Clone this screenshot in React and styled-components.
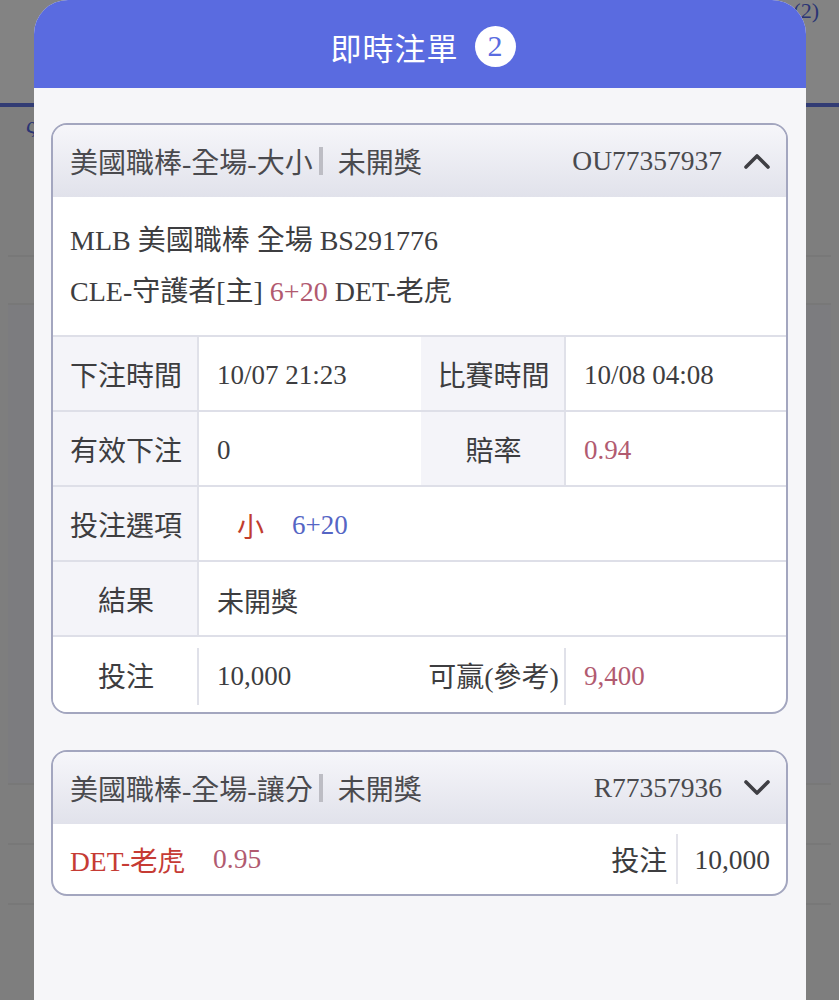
import React from "react";
import styled, { createGlobalStyle } from "styled-components";

const GlobalStyle = createGlobalStyle`
  html, body {
    margin: 0;
    padding: 0;
    width: 839px;
    height: 1000px;
    overflow: hidden;
    background: #7f7f7f;
  }
  * {
    box-sizing: border-box;
  }
  body {
    font-family: "Liberation Serif", "Noto Sans CJK TC", serif;
  }
`;

const bets = {
  open: {
    title: "美國職棒-全場-大小",
    status: "未開獎",
    id: "OU77357937",
    league: "MLB 美國職棒 全場 BS291776",
    home: "CLE-守護者[主]",
    line: "6+20",
    away: "DET-老虎",
    placedAt: "10/07 21:23",
    matchAt: "10/08 04:08",
    valid: "0",
    odds: "0.94",
    pick: "小",
    result: "未開獎",
    stake: "10,000",
    win: "9,400",
  },
  closed: {
    title: "美國職棒-全場-讓分",
    status: "未開獎",
    id: "R77357936",
    team: "DET-老虎",
    odds: "0.95",
    stake: "10,000",
  },
};

const Chevron = ({ up }) => (
  <svg width="26" height="16" viewBox="0 0 26 16" fill="none">
    <polyline
      points={up ? "2,14 13,3 24,14" : "2,2 13,13 24,2"}
      stroke="#3f3f44"
      strokeWidth="3.6"
      strokeLinecap="round"
      strokeLinejoin="round"
    />
  </svg>
);

const App = () => {
  const a = bets.open;
  const b = bets.closed;

  return (
    <>
      <GlobalStyle />
      <Backdrop>
        <BackTop>
          <BackCorner>(2)</BackCorner>
        </BackTop>
        <BackMark>ς</BackMark>
        <BackPanel $h={150} />
        <BackPanel $h={48} />
        <BackPanel $h={480} $dark />
        <BackPanel $h={60} />
        <BackPanel $h={60} />
      </Backdrop>

      <Modal>
        <ModalHead>
          <ModalTitle>即時注單</ModalTitle>
          <Badge>2</Badge>
        </ModalHead>

        <ModalBody>
          <Card>
            <CardHead>
              <HeadLeft>
                {a.title}
                <Bar />
                {a.status}
              </HeadLeft>
              <HeadRight>
                {a.id}
                <Chevron up />
              </HeadRight>
            </CardHead>

            <Info>
              <InfoLine>{a.league}</InfoLine>
              <InfoLine>
                {a.home} <Rose>{a.line}</Rose> {a.away}
              </InfoLine>
            </Info>

            <Table>
              <Label>下注時間</Label>
              <Value>{a.placedAt}</Value>
              <Label>比賽時間</Label>
              <Value>{a.matchAt}</Value>

              <Label>有效下注</Label>
              <Value>{a.valid}</Value>
              <Label>賠率</Label>
              <Value>
                <Rose>{a.odds}</Rose>
              </Value>

              <Label>投注選項</Label>
              <Value $span>
                <Pick>{a.pick}</Pick>
                <Blue>{a.line}</Blue>
              </Value>

              <Label>結果</Label>
              <Value $span>{a.result}</Value>

              <Label $plain $bottom>
                投注
              </Label>
              <Value $bottom>{a.stake}</Value>
              <Label $plain $bottom>
                可贏(參考)
              </Label>
              <Value $bottom>
                <Rose>{a.win}</Rose>
              </Value>
            </Table>
          </Card>

          <Card>
            <CardHead>
              <HeadLeft>
                {b.title}
                <Bar />
                {b.status}
              </HeadLeft>
              <HeadRight>
                {b.id}
                <Chevron />
              </HeadRight>
            </CardHead>
            <Summary>
              <Team>{b.team}</Team>
              <Rose>{b.odds}</Rose>
              <StakeLabel>投注</StakeLabel>
              <StakeValue>{b.stake}</StakeValue>
            </Summary>
          </Card>
        </ModalBody>
      </Modal>
    </>
  );
};

const Backdrop = styled.div`
  width: 839px;
  height: 1000px;
  background: #7e7e7e;
  display: flex;
  flex-direction: column;
  position: relative;
`;

const BackTop = styled.div`
  height: 107px;
  background: #838383;
  border-bottom: 4px solid #323c74;
  display: flex;
  justify-content: flex-end;
`;

const BackCorner = styled.span`
  color: #2a3474;
  font-size: 22px;
  margin: 0 20px 0 0;
  line-height: 22px;
`;

const BackMark = styled.span`
  position: absolute;
  left: 26px;
  top: 112px;
  color: #2a3474;
  font-size: 24px;
`;

const BackPanel = styled.div`
  height: ${(p) => p.$h}px;
  margin: 0 8px;
  border-bottom: 2px solid #787878;
  background: ${(p) => (p.$dark ? "#7c7c7f" : "transparent")};
`;

const Modal = styled.div`
  position: fixed;
  left: 34px;
  top: 0;
  width: 772px;
  bottom: 0;
  background: #f6f6f9;
  border-radius: 34px 34px 0 0;
  overflow: hidden;
  display: flex;
  flex-direction: column;
`;

const ModalHead = styled.div`
  height: 88px;
  flex-shrink: 0;
  background: #5a6be0;
  display: flex;
  align-items: center;
  justify-content: center;
  gap: 16px;
  padding: 4px 0 0 6px;
`;

const ModalTitle = styled.span`
  color: #fff;
  font-family: "Noto Sans CJK TC", sans-serif;
  font-size: 31px;
  letter-spacing: 1px;
`;

const Badge = styled.span`
  width: 41px;
  height: 41px;
  border-radius: 50%;
  background: #fff;
  color: #5a6be0;
  font-size: 30px;
  display: flex;
  align-items: center;
  justify-content: center;
`;

const ModalBody = styled.div`
  padding: 35px 18px 0 17px;
  display: flex;
  flex-direction: column;
  gap: 36px;
`;

const Card = styled.div`
  border: 2px solid #a3a6bf;
  border-radius: 16px;
  background: #fff;
  overflow: hidden;
`;

const CardHead = styled.div`
  height: 72px;
  background: linear-gradient(#f6f6fa, #e1e2eb);
  display: flex;
  align-items: center;
  justify-content: space-between;
  padding: 0 16px 0 17px;
  color: #4a4a4e;
  font-size: 28px;
`;

const HeadLeft = styled.div`
  display: flex;
  align-items: center;
`;

const Bar = styled.span`
  width: 4px;
  height: 28px;
  background: #bdbdc4;
  margin: 0 15px 0 6px;
`;

const HeadRight = styled.div`
  display: flex;
  align-items: center;
  gap: 22px;
  font-size: 27.5px;
`;

const Info = styled.div`
  padding: 18px 17px;
  color: #3d3d40;
  font-size: 28px;
`;

const InfoLine = styled.div`
  line-height: 51px;
`;

const Rose = styled.span`
  color: #b15a70;
`;

const Blue = styled.span`
  color: #5565c4;
`;

const Pick = styled.span`
  color: #c13d2e;
  margin: 0 28px 0 20px;
`;

const Table = styled.div`
  display: grid;
  grid-template-columns: 146px 222px 145px 1fr;
  grid-auto-rows: 75px;
  border-top: 2px solid #dedfe8;
  color: #3d3d40;
`;

const Label = styled.div`
  display: flex;
  align-items: center;
  justify-content: center;
  white-space: nowrap;
  font-size: 28px;
  background: ${(p) => (p.$plain ? "#fff" : "#f4f4f9")};
  border-bottom: ${(p) => (p.$bottom ? "none" : "2px solid #dedfe8")};
  position: relative;

  &::after {
    content: "";
    position: absolute;
    right: 0;
    top: ${(p) => (p.$bottom ? "11px" : "0")};
    bottom: ${(p) => (p.$bottom ? "7px" : "0")};
    width: 2px;
    background: #e0e1e9;
  }
`;

const Value = styled.div`
  display: flex;
  align-items: center;
  padding: 4px 0 0 18px;
  font-size: 27px;
  grid-column: ${(p) => (p.$span ? "span 3" : "auto")};
  border-bottom: ${(p) => (p.$bottom ? "none" : "2px solid #dedfe8")};
`;

const Summary = styled.div`
  height: 70px;
  display: flex;
  align-items: center;
  padding: 0 16px 0 17px;
  font-size: 27.5px;
  color: #3d3d40;
  gap: 28px;
`;

const Team = styled.span`
  color: #c63b34;
`;

const StakeLabel = styled.span`
  margin-left: auto;
  padding-right: 9px;
  height: 50px;
  display: flex;
  align-items: center;
  font-size: 28px;
  border-right: 2px solid #e3e3ea;
  margin-right: -12px;
`;

const StakeValue = styled.span`
  padding-top: 2px;
`;

export default App;
